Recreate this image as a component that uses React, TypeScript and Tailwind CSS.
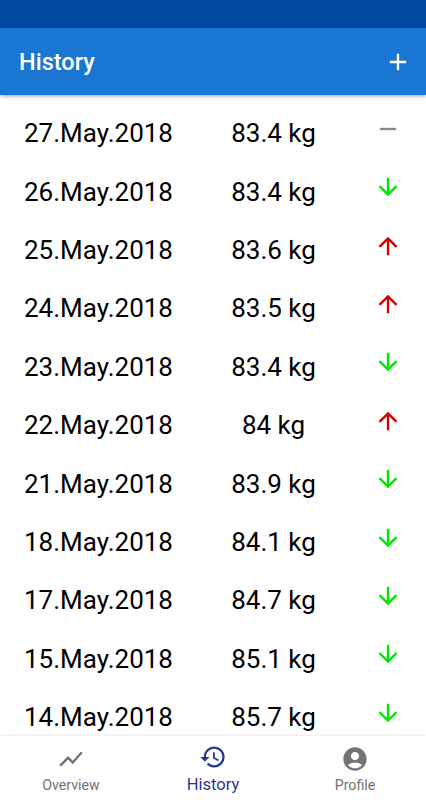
import { useState } from "react";
import {
  MdAdd,
  MdRemove,
  MdArrowUpward,
  MdArrowDownward,
  MdShowChart,
  MdHistory,
  MdAccountCircle,
} from "react-icons/md";

type Trend = "same" | "up" | "down";

const entries: { date: string; weight: string; trend: Trend }[] = [
  { date: "27.May.2018", weight: "83.4 kg", trend: "same" },
  { date: "26.May.2018", weight: "83.4 kg", trend: "down" },
  { date: "25.May.2018", weight: "83.6 kg", trend: "up" },
  { date: "24.May.2018", weight: "83.5 kg", trend: "up" },
  { date: "23.May.2018", weight: "83.4 kg", trend: "down" },
  { date: "22.May.2018", weight: "84 kg", trend: "up" },
  { date: "21.May.2018", weight: "83.9 kg", trend: "down" },
  { date: "18.May.2018", weight: "84.1 kg", trend: "down" },
  { date: "17.May.2018", weight: "84.7 kg", trend: "down" },
  { date: "15.May.2018", weight: "85.1 kg", trend: "down" },
  { date: "14.May.2018", weight: "85.7 kg", trend: "down" },
];

const tabs = [
  { name: "Overview", icon: MdShowChart },
  { name: "History", icon: MdHistory },
  { name: "Profile", icon: MdAccountCircle },
];

function TrendIcon({ trend }: { trend: Trend }) {
  if (trend === "up") return <MdArrowUpward size={28} className="text-[#d50000]" />;
  if (trend === "down") return <MdArrowDownward size={28} className="text-[#00e600]" />;
  return <MdRemove size={28} className="text-[#888888]" />;
}

export default function App() {
  const [active, setActive] = useState("History");

  return (
    <div className="h-screen flex flex-col overflow-hidden bg-white font-[Roboto,sans-serif]">
      {/* Status bar */}
      <div className="h-7 shrink-0 bg-[#004a9f]" />

      <header className="h-[67px] shrink-0 z-10 flex items-center justify-between pl-[19px] pr-[14.5px] bg-[#1976d2] text-white shadow-[0_1px_4px_rgba(0,0,0,0.4)]">
        <h1 className="pt-[3px] text-[23.5px] font-medium">History</h1>
        <button aria-label="Add entry"><MdAdd size={28} /></button>
      </header>

      {/* Entries */}
      <main className="flex-1 min-h-0 overflow-hidden pt-[9.6px]">
        {entries.map((entry) => (
          <div key={entry.date} className="h-[58.4px] flex items-center pl-6 pr-6 text-[26px] text-black">
            <span className="w-[180px] whitespace-nowrap">{entry.date}</span>
            <span className="w-[139px] text-center whitespace-nowrap">{entry.weight}</span>
            <span className="ml-auto pb-[10px]"><TrendIcon trend={entry.trend} /></span>
          </div>
        ))}
      </main>

      {/* Bottom tabs */}
      <nav className="h-16 shrink-0 z-10 flex bg-white shadow-[0_0_3px_rgba(0,0,0,0.15)]">
        {tabs.map(({ name, icon: Icon }) => (
          <button
            key={name}
            onClick={() => setActive(name)}
            className={`flex-1 flex flex-col items-center ${
              active === name ? "pt-[7px] text-[#283593] text-[16.5px]" : "pt-[9px] text-[#737373] text-[14.2px]"
            }`}
          >
            <Icon size={28} />
            <span className={active === name ? "leading-7" : "leading-6"}>{name}</span>
          </button>
        ))}
      </nav>
    </div>
  );
}
